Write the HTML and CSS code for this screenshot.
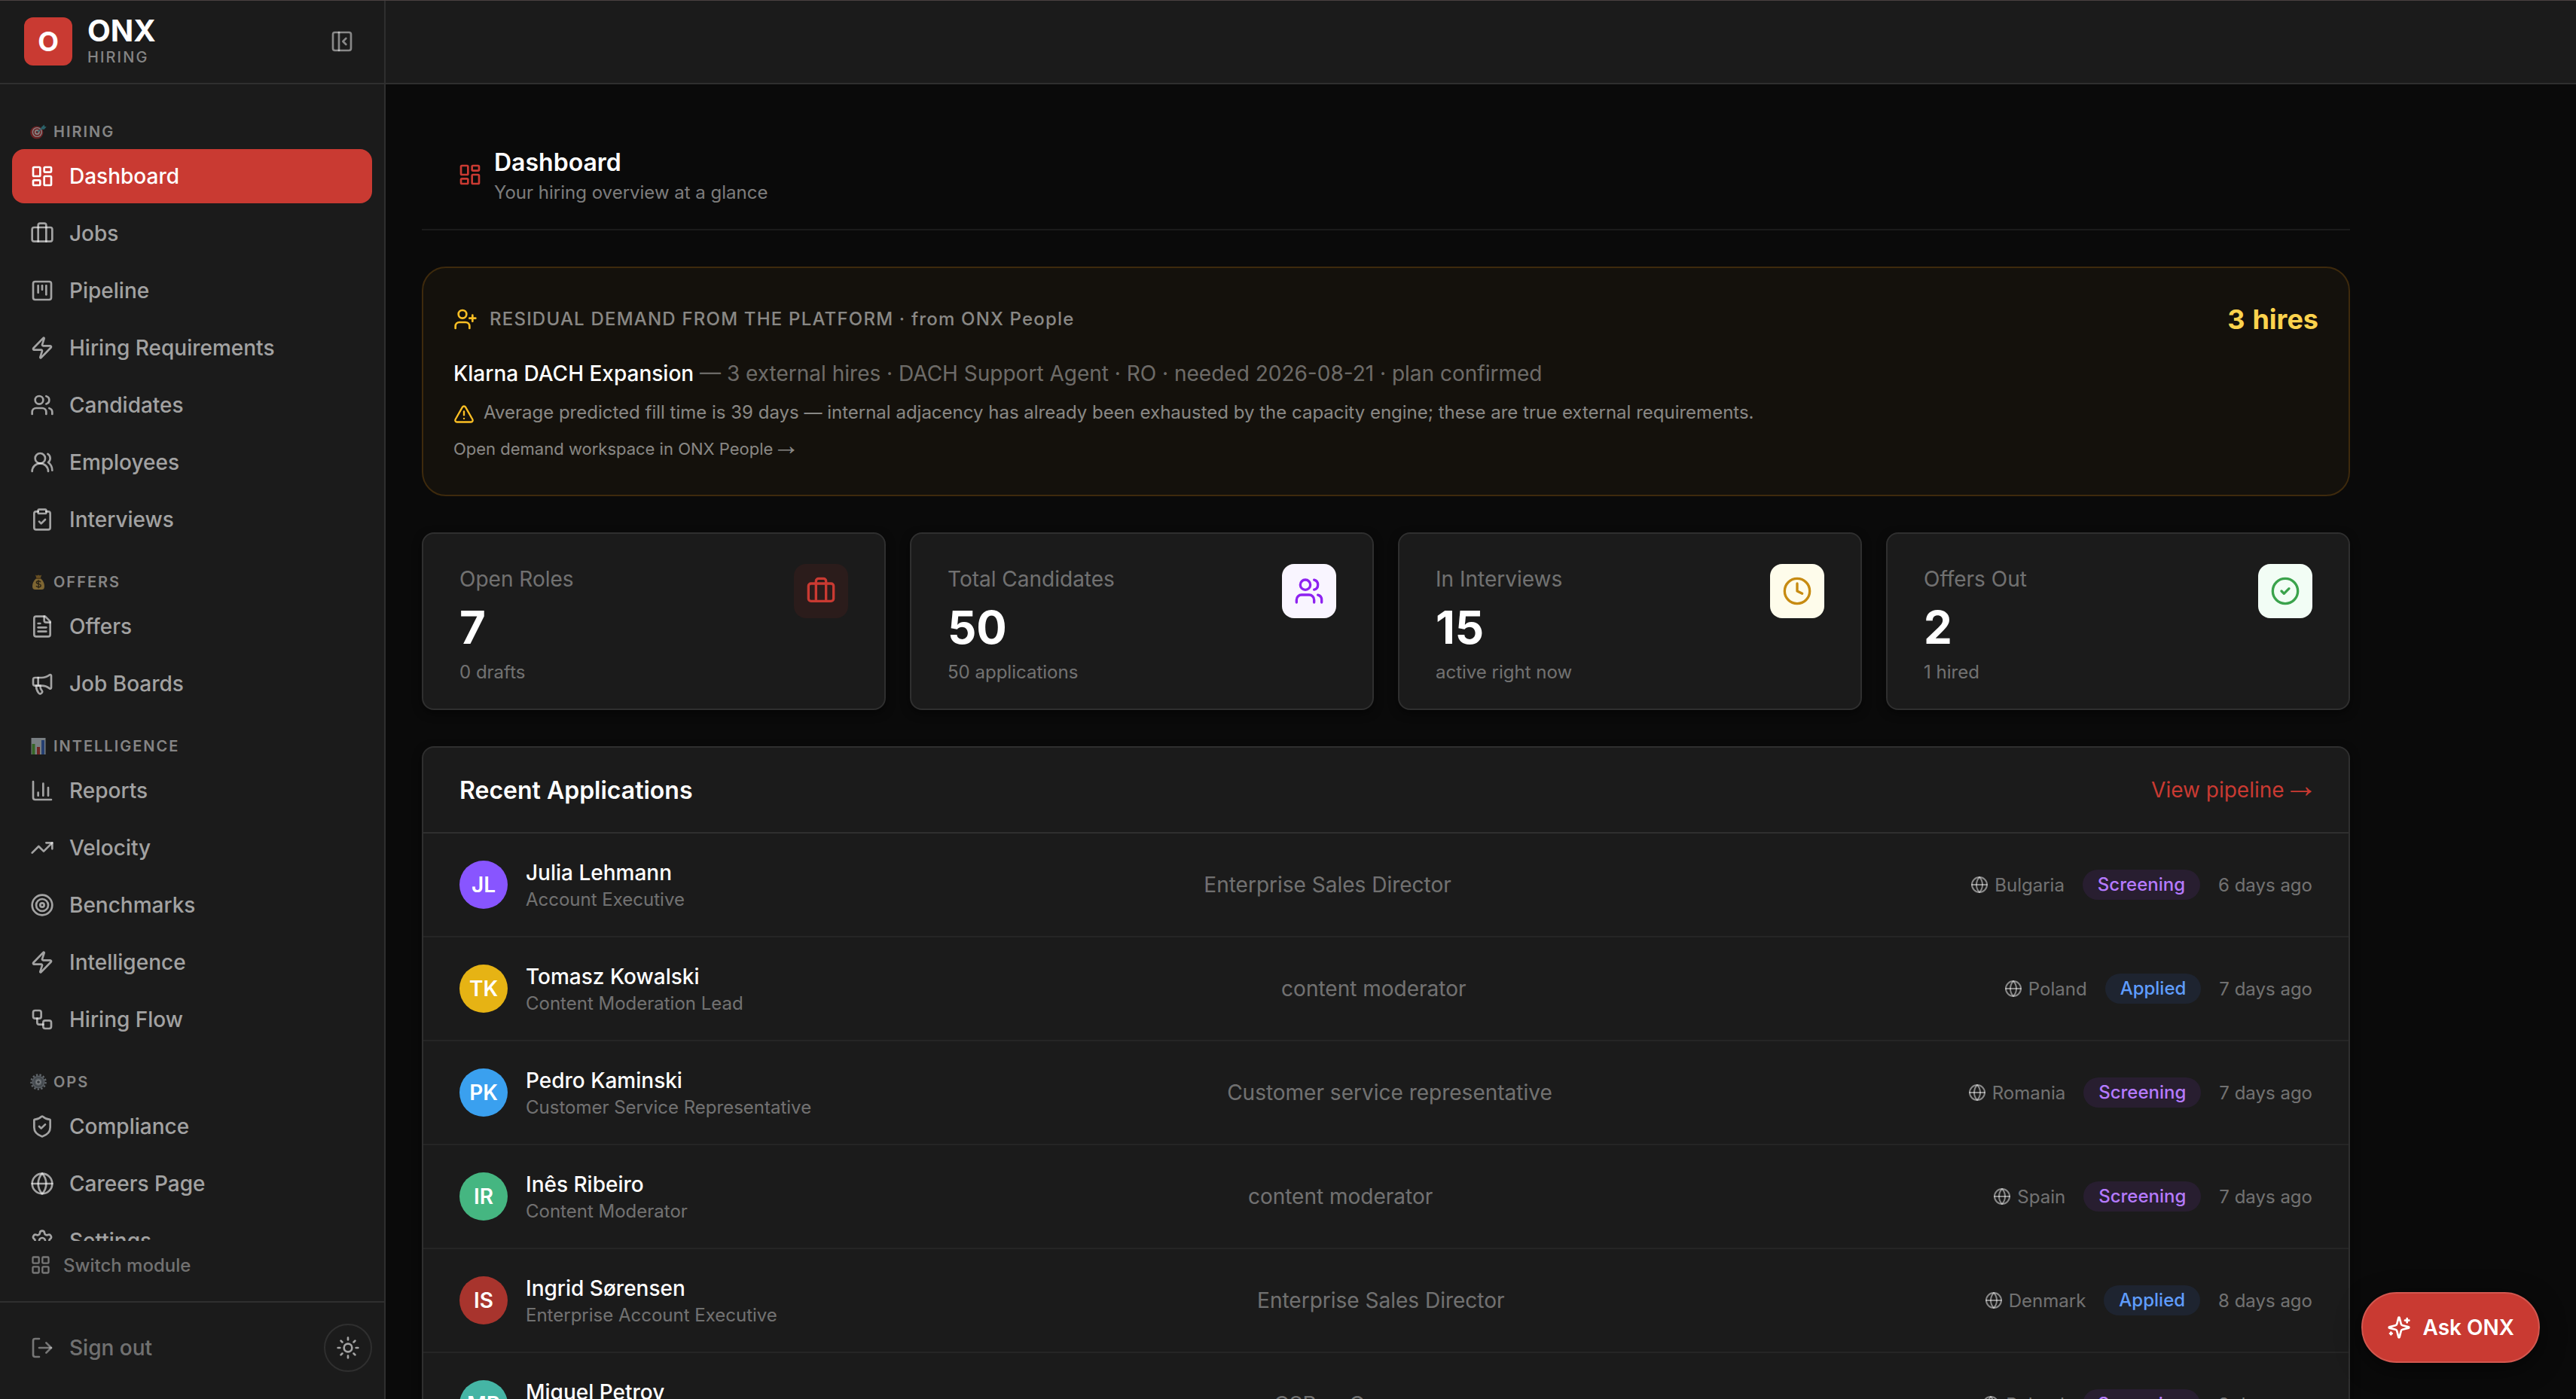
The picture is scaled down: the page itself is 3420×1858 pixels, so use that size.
FILE: index.html
```html
<!DOCTYPE html>
<html lang="en">
<head>
<meta charset="utf-8">
<title>ONX Hiring – Dashboard</title>
<link rel="stylesheet" href="styles.css">
</head>
<body>
<svg class="sprite" aria-hidden="true">
  <symbol id="i-dashboard" viewBox="0 0 24 24"><rect width="7" height="9" x="3" y="3" rx="1"/><rect width="7" height="5" x="14" y="3" rx="1"/><rect width="7" height="9" x="14" y="12" rx="1"/><rect width="7" height="5" x="3" y="16" rx="1"/></symbol>
  <symbol id="i-briefcase" viewBox="0 0 24 24"><path d="M16 20V4a2 2 0 0 0-2-2h-4a2 2 0 0 0-2 2v16"/><rect width="20" height="14" x="2" y="6" rx="2"/></symbol>
  <symbol id="i-kanban" viewBox="0 0 24 24"><rect width="18" height="18" x="3" y="3" rx="2"/><path d="M8 7v7"/><path d="M12 7v4"/><path d="M16 7v9"/></symbol>
  <symbol id="i-zap" viewBox="0 0 24 24"><path d="M4 14a1 1 0 0 1-.78-1.63l9.9-10.2a.5.5 0 0 1 .86.46l-1.92 6.02A1 1 0 0 0 13 10h7a1 1 0 0 1 .78 1.63l-9.9 10.2a.5.5 0 0 1-.86-.46l1.92-6.02A1 1 0 0 0 11 14z"/></symbol>
  <symbol id="i-users" viewBox="0 0 24 24"><path d="M16 21v-2a4 4 0 0 0-4-4H6a4 4 0 0 0-4 4v2"/><circle cx="9" cy="7" r="4"/><path d="M22 21v-2a4 4 0 0 0-3-3.87"/><path d="M16 3.13a4 4 0 0 1 0 7.75"/></symbol>
  <symbol id="i-users-round" viewBox="0 0 24 24"><path d="M18 21a8 8 0 0 0-16 0"/><circle cx="10" cy="8" r="5"/><path d="M22 20c0-3.37-2-6.5-4-8a5 5 0 0 0-.45-8.3"/></symbol>
  <symbol id="i-clipboard" viewBox="0 0 24 24"><rect width="8" height="4" x="8" y="2" rx="1" ry="1"/><path d="M16 4h2a2 2 0 0 1 2 2v14a2 2 0 0 1-2 2H6a2 2 0 0 1-2-2V6a2 2 0 0 1 2-2h2"/><path d="m9 14 2 2 4-4"/></symbol>
  <symbol id="i-file" viewBox="0 0 24 24"><path d="M15 2H6a2 2 0 0 0-2 2v16a2 2 0 0 0 2 2h12a2 2 0 0 0 2-2V7Z"/><path d="M14 2v4a2 2 0 0 0 2 2h4"/><path d="M10 9H8"/><path d="M16 13H8"/><path d="M16 17H8"/></symbol>
  <symbol id="i-megaphone" viewBox="0 0 24 24"><path d="M11 6a13 13 0 0 0 8.4-2.8A1 1 0 0 1 21 4v12a1 1 0 0 1-1.6.8A13 13 0 0 0 11 14H5a2 2 0 0 1-2-2V8a2 2 0 0 1 2-2z"/><path d="M6 14a12 12 0 0 0 2.4 7.2 2 2 0 0 0 3.2-2.4A8 8 0 0 1 10 14"/><path d="M8 6v8"/></symbol>
  <symbol id="i-chart" viewBox="0 0 24 24"><path d="M3 3v16a2 2 0 0 0 2 2h16"/><path d="M18 17V9"/><path d="M13 17V5"/><path d="M8 17v-3"/></symbol>
  <symbol id="i-trend" viewBox="0 0 24 24"><path d="M22 7 13.5 15.5 8.500 10.500 2 17"/><path d="M16 7h6v6"/></symbol>
  <symbol id="i-target" viewBox="0 0 24 24"><circle cx="12" cy="12" r="10"/><circle cx="12" cy="12" r="6"/><circle cx="12" cy="12" r="2"/></symbol>
  <symbol id="i-workflow" viewBox="0 0 24 24"><rect width="8" height="8" x="3" y="3" rx="2"/><path d="M7 11v4a2 2 0 0 0 2 2h4"/><rect width="8" height="8" x="13" y="13" rx="2"/></symbol>
  <symbol id="i-shield" viewBox="0 0 24 24"><path d="M20 13c0 5-3.5 7.500-7.660 8.950a1 1 0 0 1-.67-.01C7.500 20.500 4 18 4 13V6a1 1 0 0 1 1-1c2 0 4.500-1.200 6.240-2.720a1.170 1.170 0 0 1 1.520 0C14.510 3.810 17 5 19 5a1 1 0 0 1 1 1z"/><path d="m9 12 2 2 4-4"/></symbol>
  <symbol id="i-globe" viewBox="0 0 24 24"><circle cx="12" cy="12" r="10"/><path d="M12 2a14.500 14.500 0 0 0 0 20 14.500 14.500 0 0 0 0-20"/><path d="M2 12h20"/></symbol>
  <symbol id="i-settings" viewBox="0 0 24 24"><path d="M9.671 4.136a2.340 2.340 0 0 1 4.659 0 2.340 2.340 0 0 0 3.319 1.915 2.340 2.340 0 0 1 2.330 4.033 2.340 2.340 0 0 0 0 3.831 2.340 2.340 0 0 1-2.330 4.033 2.340 2.340 0 0 0-3.319 1.915 2.340 2.340 0 0 1-4.659 0 2.340 2.340 0 0 0-3.320-1.915 2.340 2.340 0 0 1-2.330-4.033 2.340 2.340 0 0 0 0-3.831A2.340 2.340 0 0 1 6.350 6.051a2.340 2.340 0 0 0 3.319-1.915"/><circle cx="12" cy="12" r="3"/></symbol>
  <symbol id="i-grid" viewBox="0 0 24 24"><rect width="7" height="7" x="3" y="3" rx="1"/><rect width="7" height="7" x="14" y="3" rx="1"/><rect width="7" height="7" x="14" y="14" rx="1"/><rect width="7" height="7" x="3" y="14" rx="1"/></symbol>
  <symbol id="i-logout" viewBox="0 0 24 24"><path d="M9 21H5a2 2 0 0 1-2-2V5a2 2 0 0 1 2-2h4"/><path d="m16 17 5-5-5-5"/><path d="M21 12H9"/></symbol>
  <symbol id="i-sun" viewBox="0 0 24 24"><circle cx="12" cy="12" r="4"/><path d="M12 2v2"/><path d="M12 20v2"/><path d="m4.930 4.930 1.410 1.410"/><path d="m17.660 17.660 1.410 1.410"/><path d="M2 12h2"/><path d="M20 12h2"/><path d="m6.340 17.660-1.410 1.410"/><path d="m19.070 4.930-1.410 1.410"/></symbol>
  <symbol id="i-panel" viewBox="0 0 24 24"><rect width="18" height="18" x="3" y="3" rx="2"/><path d="M9 3v18"/><path d="m16 15-3-3 3-3"/></symbol>
  <symbol id="i-user-plus" viewBox="0 0 24 24"><path d="M16 21v-2a4 4 0 0 0-4-4H6a4 4 0 0 0-4 4v2"/><circle cx="9" cy="7" r="4"/><path d="M19 8v6"/><path d="M22 11h-6"/></symbol>
  <symbol id="i-alert" viewBox="0 0 24 24"><path d="m21.730 18-8-14a2 2 0 0 0-3.480 0l-8 14A2 2 0 0 0 4 21h16a2 2 0 0 0 1.730-3"/><path d="M12 9v4"/><path d="M12 17h.01"/></symbol>
  <symbol id="i-clock" viewBox="0 0 24 24"><circle cx="12" cy="12" r="10"/><path d="M12 6v6l4 2"/></symbol>
  <symbol id="i-check" viewBox="0 0 24 24"><circle cx="12" cy="12" r="10"/><path d="m9 12 2 2 4-4"/></symbol>
  <symbol id="i-sparkles" viewBox="0 0 24 24"><path d="M9.937 15.500A2 2 0 0 0 8.500 14.063l-6.135-1.582a.5.5 0 0 1 0-.962L8.500 9.936A2 2 0 0 0 9.937 8.500l1.582-6.135a.5.5 0 0 1 .963 0L14.063 8.500A2 2 0 0 0 15.500 9.937l6.135 1.581a.5.5 0 0 1 0 .964L15.500 14.063a2 2 0 0 0-1.437 1.437l-1.582 6.135a.5.5 0 0 1-.963 0z"/><path d="M20 3v4"/><path d="M22 5h-4"/><path d="M4 17v2"/><path d="M5 18H3"/></symbol>
  <symbol id="e-dart" viewBox="0 0 22 22"><circle cx="8.800" cy="12" r="8.600" fill="#b8262a"/><circle cx="9.300" cy="11.500" r="6.600" fill="#f3eeee"/><circle cx="9.300" cy="11.500" r="5.200" fill="#b8262a"/><circle cx="9.300" cy="11.500" r="3.500" fill="#f3eeee"/><circle cx="9.300" cy="11.500" r="1.800" fill="#b8262a"/><path d="M9.500 11.500 17 5" stroke="#39a7b8" stroke-width="1.600"/><path d="M14.800 7.500V5L18.800 1.500l.4 2.600 2.500.5L18.400 8z" fill="#3aa6b5"/></symbol>
  <symbol id="e-bag" viewBox="0 0 22 22"><path d="M7 1.500 9 2.600 11 1.500l2 1.100 2.200-1.100L13.700 6H8.500z" fill="#b5842a"/><path d="M8.300 6h5.500c3.200 2.600 5.200 6.500 5.200 10.500 0 3.200-1.200 4.500-3.500 4.500H6.700C4.300 21 3 19.700 3 16.500 3 12.500 5 8.600 8.300 6z" fill="#e0b04a"/><path d="M8 6.200h6" stroke="#7d551a" stroke-width="1.400"/><path d="M14 11.200c-.4-1-1.500-1.500-2.900-1.500-1.600 0-2.800.7-2.800 1.900 0 2.900 5.900 1.200 5.900 4.100 0 1.200-1.200 2-3 2-1.600 0-2.800-.6-3.200-1.700M11.100 8.200v11" fill="none" stroke="#3a2c10" stroke-width="1.400"/></symbol>
  <symbol id="e-bars" viewBox="0 0 22 22"><path d="M1.500 0h19v22h-19z" fill="#d7e2ea"/><path d="M2.500 8h4v14h-4z" fill="#4fae32"/><path d="M9 12h4v10H9z" fill="#c6302b"/><path d="M15 3h4v19h-4z" fill="#2f63c9"/></symbol>
  <symbol id="e-gear" viewBox="0 0 22 22"><circle cx="11" cy="11" r="9.600" fill="none" stroke="#a7b2bc" stroke-width="2.400" stroke-dasharray="2.400 2.240"/><circle cx="11" cy="11" r="8.600" fill="#8f9aa4"/><circle cx="11" cy="11" r="5.800" fill="none" stroke="#69737c" stroke-width="1.800"/><circle cx="11" cy="11" r="2.600" fill="#48515a" stroke="#dbe3e9" stroke-width="1.500"/></symbol>
</svg>

<div class="app">
  <aside class="sidebar">
    <div class="brand">
      <div class="brand-mark">O</div>
      <div class="brand-text">
        <div class="brand-name">ONX</div>
        <div class="brand-sub">HIRING</div>
      </div>
      <svg class="icon toggle"><use href="#i-panel"/></svg>
    </div>

    <nav class="nav">
      <section class="nav-group">
        <h2 class="nav-label"><svg class="emoji"><use href="#e-dart"/></svg>HIRING</h2>
        <a class="nav-item active"><svg class="icon"><use href="#i-dashboard"/></svg>Dashboard</a>
        <a class="nav-item"><svg class="icon"><use href="#i-briefcase"/></svg>Jobs</a>
        <a class="nav-item"><svg class="icon"><use href="#i-kanban"/></svg>Pipeline</a>
        <a class="nav-item"><svg class="icon"><use href="#i-zap"/></svg>Hiring Requirements</a>
        <a class="nav-item"><svg class="icon"><use href="#i-users"/></svg>Candidates</a>
        <a class="nav-item"><svg class="icon"><use href="#i-users-round"/></svg>Employees</a>
        <a class="nav-item"><svg class="icon"><use href="#i-clipboard"/></svg>Interviews</a>
      </section>
      <section class="nav-group">
        <h2 class="nav-label"><svg class="emoji"><use href="#e-bag"/></svg>OFFERS</h2>
        <a class="nav-item"><svg class="icon"><use href="#i-file"/></svg>Offers</a>
        <a class="nav-item"><svg class="icon"><use href="#i-megaphone"/></svg>Job Boards</a>
      </section>
      <section class="nav-group">
        <h2 class="nav-label"><svg class="emoji"><use href="#e-bars"/></svg>INTELLIGENCE</h2>
        <a class="nav-item"><svg class="icon"><use href="#i-chart"/></svg>Reports</a>
        <a class="nav-item"><svg class="icon"><use href="#i-trend"/></svg>Velocity</a>
        <a class="nav-item"><svg class="icon"><use href="#i-target"/></svg>Benchmarks</a>
        <a class="nav-item"><svg class="icon"><use href="#i-zap"/></svg>Intelligence</a>
        <a class="nav-item"><svg class="icon"><use href="#i-workflow"/></svg>Hiring Flow</a>
      </section>
      <section class="nav-group">
        <h2 class="nav-label"><svg class="emoji"><use href="#e-gear"/></svg>OPS</h2>
        <a class="nav-item"><svg class="icon"><use href="#i-shield"/></svg>Compliance</a>
        <a class="nav-item"><svg class="icon"><use href="#i-globe"/></svg>Careers Page</a>
        <a class="nav-item"><svg class="icon"><use href="#i-settings"/></svg>Settings</a>
      </section>
    </nav>

    <a class="switch"><svg class="icon"><use href="#i-grid"/></svg>Switch module</a>

    <div class="side-foot">
      <a class="signout"><svg class="icon"><use href="#i-logout"/></svg>Sign out</a>
      <button class="theme"><svg class="icon"><use href="#i-sun"/></svg></button>
    </div>
  </aside>

  <div class="main">
    <header class="topbar"></header>
    <main class="content">
      <div class="page-head">
        <svg class="icon"><use href="#i-dashboard"/></svg>
        <div>
          <h1 class="page-title">Dashboard</h1>
          <p class="page-sub">Your hiring overview at a glance</p>
        </div>
      </div>

      <section class="demand">
        <div class="demand-top">
          <svg class="icon"><use href="#i-user-plus"/></svg>
          <span class="demand-label">RESIDUAL DEMAND FROM THE PLATFORM · from ONX People</span>
          <strong class="demand-count">3 hires</strong>
        </div>
        <p class="demand-line"><b>Klarna DACH Expansion</b> — 3 external hires · DACH Support Agent · RO · needed 2026-08-21 · plan confirmed</p>
        <p class="demand-warn"><svg class="icon"><use href="#i-alert"/></svg>Average predicted fill time is 39 days — internal adjacency has already been exhausted by the capacity engine; these are true external requirements.</p>
        <a class="demand-link">Open demand workspace in ONX People <span class="arrow">→</span></a>
      </section>

      <section class="stats">
        <article class="stat">
          <div><p class="stat-label">Open Roles</p><p class="stat-value">7</p><p class="stat-note">0 drafts</p></div>
          <div class="stat-icon red"><svg class="icon"><use href="#i-briefcase"/></svg></div>
        </article>
        <article class="stat">
          <div><p class="stat-label">Total Candidates</p><p class="stat-value">50</p><p class="stat-note">50 applications</p></div>
          <div class="stat-icon purple"><svg class="icon"><use href="#i-users"/></svg></div>
        </article>
        <article class="stat">
          <div><p class="stat-label">In Interviews</p><p class="stat-value">15</p><p class="stat-note">active right now</p></div>
          <div class="stat-icon amber"><svg class="icon"><use href="#i-clock"/></svg></div>
        </article>
        <article class="stat">
          <div><p class="stat-label">Offers Out</p><p class="stat-value">2</p><p class="stat-note">1 hired</p></div>
          <div class="stat-icon green"><svg class="icon"><use href="#i-check"/></svg></div>
        </article>
      </section>

      <section class="panel">
        <div class="panel-head">
          <h2 class="panel-title">Recent Applications</h2>
          <a class="panel-link">View pipeline <span class="arrow">→</span></a>
        </div>
        <div class="row">
          <div class="person"><span class="avatar violet">JL</span><div><p class="name">Julia Lehmann</p><p class="role">Account Executive</p></div></div>
          <span class="job">Enterprise Sales Director</span>
          <div class="meta"><span class="country"><svg class="icon"><use href="#i-globe"/></svg>Bulgaria</span><span class="pill screening">Screening</span><span>6 days ago</span></div>
        </div>
        <div class="row">
          <div class="person"><span class="avatar gold">TK</span><div><p class="name">Tomasz Kowalski</p><p class="role">Content Moderation Lead</p></div></div>
          <span class="job">content moderator</span>
          <div class="meta"><span class="country"><svg class="icon"><use href="#i-globe"/></svg>Poland</span><span class="pill applied">Applied</span><span>7 days ago</span></div>
        </div>
        <div class="row">
          <div class="person"><span class="avatar blue">PK</span><div><p class="name">Pedro Kaminski</p><p class="role">Customer Service Representative</p></div></div>
          <span class="job">Customer service representative</span>
          <div class="meta"><span class="country"><svg class="icon"><use href="#i-globe"/></svg>Romania</span><span class="pill screening">Screening</span><span>7 days ago</span></div>
        </div>
        <div class="row">
          <div class="person"><span class="avatar emerald">IR</span><div><p class="name">Inês Ribeiro</p><p class="role">Content Moderator</p></div></div>
          <span class="job">content moderator</span>
          <div class="meta"><span class="country"><svg class="icon"><use href="#i-globe"/></svg>Spain</span><span class="pill screening">Screening</span><span>7 days ago</span></div>
        </div>
        <div class="row">
          <div class="person"><span class="avatar brick">IS</span><div><p class="name">Ingrid Sørensen</p><p class="role">Enterprise Account Executive</p></div></div>
          <span class="job">Enterprise Sales Director</span>
          <div class="meta"><span class="country"><svg class="icon"><use href="#i-globe"/></svg>Denmark</span><span class="pill applied">Applied</span><span>8 days ago</span></div>
        </div>
        <div class="row">
          <div class="person"><span class="avatar teal">MP</span><div><p class="name">Miguel Petrov</p><p class="role">Customer Support Rep</p></div></div>
          <span class="job">CSR — German</span>
          <div class="meta"><span class="country"><svg class="icon"><use href="#i-globe"/></svg>Poland</span><span class="pill screening">Screening</span><span>8 days ago</span></div>
        </div>
      </section>
    </main>
  </div>
</div>

<button class="ask"><svg class="icon"><use href="#i-sparkles"/></svg>Ask ONX</button>
</body>
</html>
```
FILE: styles.css
```css
* { box-sizing: border-box; margin: 0; padding: 0; }

:root {
  --bg: #0a0a0a;
  --surface: #1b1b1b;
  --line: #2f2f2f;
  --red: #c93a32;
  --text: #fff;
  --soft: rgba(255, 255, 255, .6);
  --mid: rgba(255, 255, 255, .48);
  --muted: rgba(255, 255, 255, .4);
}

html, body { height: 100%; overflow: hidden; }

body {
  background: var(--bg);
  color: var(--text);
  font-family: Inter, "Liberation Sans", sans-serif;
  font-size: 28px;
}

body::before {
  content: "";
  position: absolute;
  inset: 0 0 auto;
  height: 1px;
  background: #4a4141;
}

button { font: inherit; }
.sprite { position: absolute; width: 0; height: 0; }

.icon {
  width: 32px;
  height: 32px;
  flex: none;
  fill: none;
  stroke: currentColor;
  stroke-width: 2;
  stroke-linecap: round;
  stroke-linejoin: round;
}

/* Long thin arrow that trails a link */
.arrow {
  margin: 0 -.166em 0 -.195em;
  font-family: "Liberation Sans", Arial, sans-serif;
  font-size: 1.65em;
  line-height: 0;
}

.app { display: flex; height: 100%; }

/* Sidebar */
.sidebar {
  width: 512px;
  flex: none;
  display: flex;
  flex-direction: column;
  background: var(--surface);
  border-right: 2px solid var(--line);
}

.brand {
  height: 112px;
  flex: none;
  display: flex;
  align-items: center;
  gap: 20px;
  padding: 0 40px 0 32px;
  border-bottom: 2px solid var(--line);
}

.brand-mark {
  width: 64px;
  height: 64px;
  display: grid;
  place-items: center;
  border-radius: 12px;
  background: var(--red);
  font-size: 36px;
  font-weight: 700;
}

.brand-name { font-size: 40px; line-height: 43px; font-weight: 700; }
.brand-sub { font-size: 20px; line-height: 29px; font-weight: 500; letter-spacing: 2.1px; color: var(--mid); }
.toggle { margin-left: auto; color: var(--mid); }

.nav { flex: 1; min-height: 0; overflow: hidden; padding: 48px 16px 0; }
.nav-group { display: flex; flex-direction: column; gap: 4px; margin-bottom: 32px; }

.nav-label {
  display: flex;
  align-items: center;
  gap: 9px;
  height: 30px;
  margin-bottom: 4px;
  padding-left: 24px;
  font-size: 20px;
  font-weight: 600;
  letter-spacing: 2px;
  color: var(--mid);
}

.emoji { width: 22px; height: 22px; opacity: .5; }

.nav-item {
  display: flex;
  align-items: center;
  gap: 20px;
  height: 72px;
  flex: none;
  padding: 0 24px;
  border-radius: 16px;
  font-weight: 500;
  color: var(--soft);
}

.nav-item.active { background: var(--red); color: #fff; }

.switch {
  display: flex;
  align-items: center;
  gap: 16px;
  height: 64px;
  flex: none;
  margin-bottom: 16px;
  padding-left: 40px;
  font-size: 24px;
  font-weight: 500;
  color: var(--muted);
}

.switch .icon { width: 28px; height: 28px; }

.side-foot {
  display: flex;
  align-items: center;
  justify-content: space-between;
  height: 130px;
  flex: none;
  padding: 0 16px 8px 40px;
  border-top: 2px solid var(--line);
}

.signout { display: flex; align-items: center; gap: 20px; font-weight: 500; color: var(--muted); }

.theme {
  width: 64px;
  height: 64px;
  display: grid;
  place-items: center;
  border: 2px solid var(--line);
  border-radius: 50%;
  background: none;
  color: var(--soft);
}

/* Main column */
.main { flex: 1; min-width: 0; display: flex; flex-direction: column; }

.topbar {
  height: 112px;
  flex: none;
  background: var(--surface);
  border-bottom: 2px solid var(--line);
}

.content {
  flex: 1;
  min-height: 0;
  display: flex;
  flex-direction: column;
  gap: 48px;
  width: 2656px;
  padding: 48px 48px 0;
  overflow: hidden;
}

.content > * { flex: none; }

.page-head {
  display: flex;
  align-items: center;
  gap: 16px;
  padding: 32px 48px;
  border-bottom: 2px solid #1b1b1b;
}

.page-head .icon { color: var(--red); }
.page-title { padding-top: 1px; font-size: 32px; line-height: 46px; font-weight: 600; }
.page-sub { font-size: 24px; line-height: 33px; color: var(--mid); }

.demand {
  padding: 40px 40px 44px;
  border: 2px solid #3e2a0d;
  border-radius: 32px;
  background: #14110c;
}

.demand-top { display: flex; align-items: center; gap: 16px; height: 56px; }
.demand-top .icon, .demand-warn .icon { color: #fbbf24; }
.demand-label { font-size: 24px; line-height: 34px; padding-bottom: 1px; font-weight: 500; letter-spacing: 1.2px; color: rgba(255, 255, 255, .5); }
.demand-count { margin-left: auto; font-size: 36px; font-weight: 700; font-variant-numeric: tabular-nums; color: #fcd34d; }
.demand-line { margin-top: 23px; line-height: 42px; color: var(--muted); }
.demand-line b { font-weight: 500; color: #fff; }
.demand-warn { display: flex; gap: 12px; margin-top: 12px; font-size: 24px; line-height: 37px; color: rgba(255, 255, 255, .5); }
.demand-warn .icon { width: 28px; height: 28px; margin-top: 7px; }
.demand-link { display: block; margin-top: 13px; font-size: 22px; line-height: 34px; color: rgba(255, 255, 255, .5); }

.stats { display: grid; grid-template-columns: repeat(4, 1fr); gap: 32px; }

.stat {
  display: flex;
  justify-content: space-between;
  align-items: flex-start;
  padding: 40px 48px 31px;
  border: 2px solid var(--line);
  border-radius: 16px;
  background: var(--surface);
  box-shadow: 0 4px 12px rgba(0, 0, 0, .5);
}

.stat-label { line-height: 40px; color: var(--muted); }
.stat-value { margin-top: 8px; font-size: 60px; line-height: 72px; font-weight: 700; }
.stat-note { margin-top: 7px; font-size: 24px; line-height: 34px; color: var(--muted); }

.stat-icon { width: 72px; height: 72px; display: grid; place-items: center; border-radius: 16px; }
.stat-icon .icon { width: 40px; height: 40px; }
.red { background: #2b1c1b; color: var(--red); }
.purple { background: #f9f5ff; color: #8e22f0; }
.amber { background: #fefceb; color: #c78b12; }
.green { background: #f2fdf5; color: #3ba34c; }

.panel {
  border: 2px solid var(--line);
  border-radius: 16px;
  background: var(--surface);
  box-shadow: 0 4px 12px rgba(0, 0, 0, .5);
}

.panel-head {
  display: flex;
  align-items: center;
  justify-content: space-between;
  height: 114px;
  padding: 0 48px;
  border-bottom: 2px solid var(--line);
}

.panel-title { font-size: 32px; font-weight: 600; }
.panel-link { color: var(--red); white-space: nowrap; }

.row {
  display: flex;
  align-items: center;
  justify-content: space-between;
  height: 138px;
  padding: 0 48px;
  border-bottom: 2px solid #252525;
}

.person { display: flex; align-items: center; gap: 24px; }

.avatar {
  width: 64px;
  height: 64px;
  display: grid;
  place-items: center;
  border-radius: 50%;
  font-weight: 600;
}

.violet { background: #8855ff; }
.gold { background: #e6b314; }
.blue { background: #3aa0ef; }
.emerald { background: #45b681; }
.brick { background: #a8342d; }
.teal { background: #45b5a5; }

.name { line-height: 40px; font-weight: 500; }
.role { font-size: 24px; line-height: 32px; color: var(--muted); }
.job { color: var(--muted); }

.meta { display: flex; align-items: center; gap: 24px; font-size: 24px; color: var(--muted); }
.country { display: flex; align-items: center; gap: 8px; }
.country .icon { width: 24px; height: 24px; color: var(--mid); }

.pill { height: 40px; padding: 0 20px; border-radius: 20px; line-height: 40px; font-weight: 500; }
.screening { background: #281e30; color: #b57aff; }
.applied { background: #1e2430; color: #5f9dff; }

/* Floating assistant button */
.ask {
  position: absolute;
  right: 48px;
  bottom: 48px;
  display: flex;
  align-items: center;
  gap: 16px;
  height: 94px;
  padding: 0 32px;
  border: 2px solid #d3574f;
  border-radius: 47px;
  background: var(--red);
  color: #fff;
  font-weight: 600;
  box-shadow: 0 8px 32px rgba(0, 0, 0, .5);
}
```
